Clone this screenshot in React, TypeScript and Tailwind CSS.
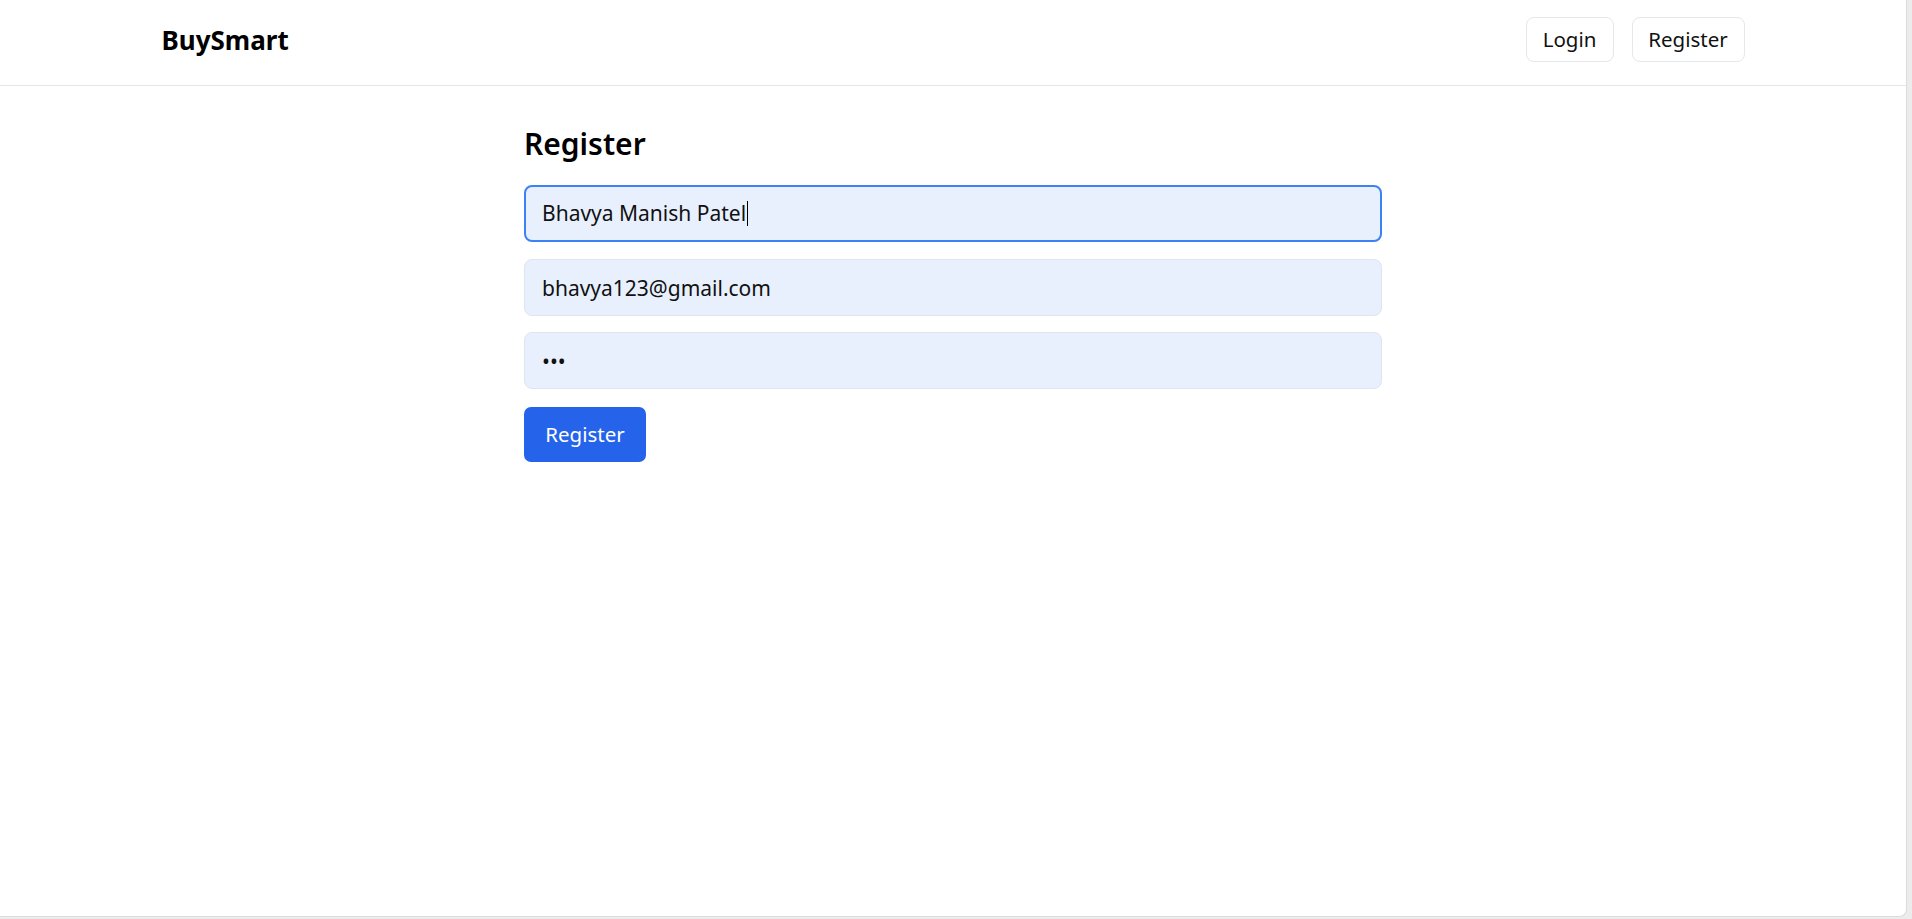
import { FormEvent } from "react";

export default function App() {
  const onSubmit = (event: FormEvent<HTMLFormElement>) => {
    event.preventDefault();
  };

  return (
    <div className="w-full h-[919px] bg-[#ececec] font-['Noto_Sans',sans-serif]">
      <div className="w-[1907px] h-[917px] bg-white border-r border-b border-[#dcdcdc] rounded-br-[8px] overflow-hidden">
        {/* navbar */}
        <header className="h-[86px] border-b border-[#e5e5e5]">
          <div className="mx-auto w-[1583px] h-[81px] flex items-center justify-between">
            <a href="#" className="text-[26px] font-bold text-black">
              BuySmart
            </a>
            <nav className="flex gap-[18px] -mt-[2px]">
              <button className="h-[45px] w-[88px] rounded-[8px] border border-[#e5e7eb] text-[20.5px] text-[#111]">
                Login
              </button>
              <button className="h-[45px] w-[113px] rounded-[8px] border border-[#e5e7eb] text-[20.5px] text-[#111]">
                Register
              </button>
            </nav>
          </div>
        </header>

        <main className="mx-auto w-[858px] pt-[40px]">
          <h1 className="text-[30px] leading-[36px] font-semibold text-black mb-[23px]">Register</h1>
          <form className="flex flex-col" onSubmit={onSubmit}>
            {/* focused field, drawn with its caret */}
            <div
              role="textbox"
              className="h-[57px] w-full rounded-[8px] border-2 border-[#3b82f6] bg-[#e8f0fe] px-[16px] text-[21px] text-[#111] flex items-center"
            >
              <span>Bhavya Manish Patel</span>
              <span className="ml-[1px] h-[25px] w-[1px] bg-black" />
            </div>
            <input
              name="email"
              type="email"
              defaultValue="bhavya123@gmail.com"
              className="mt-[17px] h-[57px] w-full rounded-[8px] border border-[#dfe5ef] bg-[#e8f0fe] px-[17px] text-[21px] text-[#111] outline-none"
            />
            <input
              name="password"
              type="password"
              defaultValue="abc"
              className="mt-[16px] h-[57px] w-full rounded-[8px] border border-[#dfe5ef] bg-[#e8f0fe] px-[17px] text-[21px] text-[#111] outline-none"
            />
            <div className="mt-[18px]">
              <button
                type="submit"
                className="h-[55px] w-[122px] rounded-[7px] bg-[#2563eb] text-[20.5px] text-white"
              >
                Register
              </button>
            </div>
          </form>
        </main>
      </div>
    </div>
  );
}
